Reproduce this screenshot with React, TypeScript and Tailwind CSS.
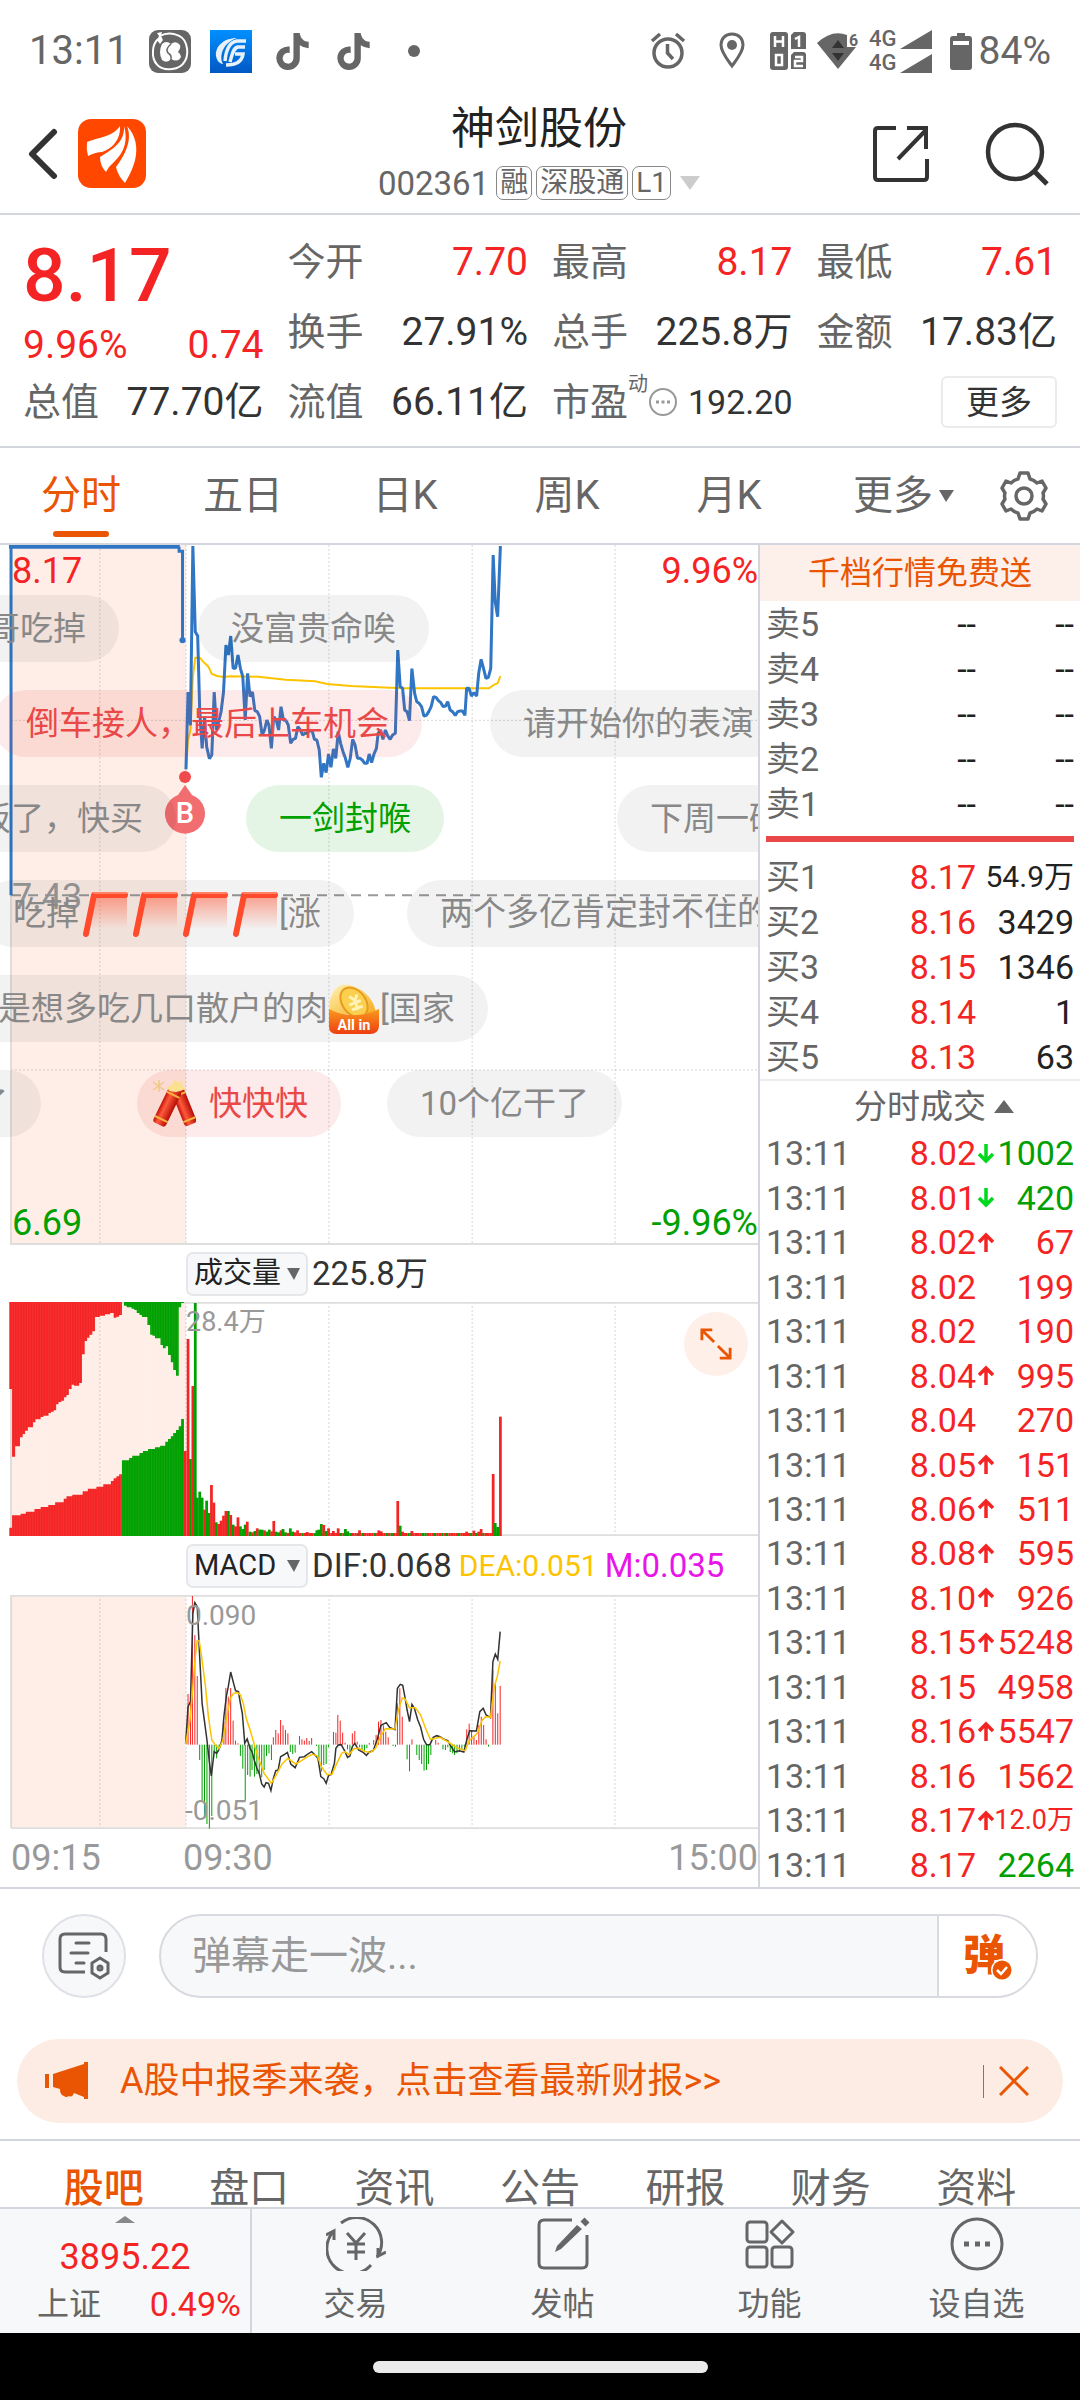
import React from "react";
import { FaTiktok } from "react-icons/fa6";

type Tone = "red" | "green";

const quoteRows: { label: string; value: string; tone: string }[] = [
  { label: "今开", value: "7.70", tone: "text-[#f52424]" },
  { label: "最高", value: "8.17", tone: "text-[#f52424]" },
  { label: "最低", value: "7.61", tone: "text-[#f52424]" },
  { label: "换手", value: "27.91%", tone: "text-[#333333]" },
  { label: "总手", value: "225.8万", tone: "text-[#333333]" },
  { label: "金额", value: "17.83亿", tone: "text-[#333333]" },
];

const bids = [
  { label: "买1", price: "8.17", size: "54.9万" },
  { label: "买2", price: "8.16", size: "3429" },
  { label: "买3", price: "8.15", size: "1346" },
  { label: "买4", price: "8.14", size: "1" },
  { label: "买5", price: "8.13", size: "63" },
];

const trades: { price: string; dir?: "up" | "down"; size: string; tone: Tone }[] = [
  { price: "8.02", dir: "down", size: "1002", tone: "green" },
  { price: "8.01", dir: "down", size: "420", tone: "green" },
  { price: "8.02", dir: "up", size: "67", tone: "red" },
  { price: "8.02", size: "199", tone: "red" },
  { price: "8.02", size: "190", tone: "red" },
  { price: "8.04", dir: "up", size: "995", tone: "red" },
  { price: "8.04", size: "270", tone: "red" },
  { price: "8.05", dir: "up", size: "151", tone: "red" },
  { price: "8.06", dir: "up", size: "511", tone: "red" },
  { price: "8.08", dir: "up", size: "595", tone: "red" },
  { price: "8.10", dir: "up", size: "926", tone: "red" },
  { price: "8.15", dir: "up", size: "5248", tone: "red" },
  { price: "8.15", size: "4958", tone: "red" },
  { price: "8.16", dir: "up", size: "5547", tone: "red" },
  { price: "8.16", size: "1562", tone: "red" },
  { price: "8.17", dir: "up", size: "12.0万", tone: "red" },
  { price: "8.17", size: "2264", tone: "green" },
];

const priceLine =
  "540,718 546,486 553,586 560,48 567,305 574,318 580,545 587,655 594,560 600,650 608,686 615,675 622,486 629,600 636,570 642,545 649,486 656,345 663,375 670,318 677,415 684,415 691,375 698,415 705,440 712,570 719,430 726,500 733,486 740,542 747,545 754,560 761,615 768,600 775,570 781,586 788,655 795,560 802,570 809,600 816,530 823,570 830,571 837,585 844,640 851,628 858,625 865,590 872,600 879,615 886,610 893,610 900,600 907,605 913,628 920,630 927,660 933,742 940,700 947,728 954,672 961,712 968,657 975,685 982,605 989,640 996,665 1003,685 1010,712 1017,685 1024,628 1031,645 1038,685 1045,685 1052,690 1059,700 1066,700 1072,672 1079,698 1086,672 1093,655 1098,610 1105,600 1112,628 1119,600 1126,618 1133,628 1140,615 1148,610 1155,360 1162,470 1169,475 1175,540 1182,545 1189,572 1196,416 1204,490 1210,515 1217,520 1224,530 1231,558 1238,556 1245,545 1252,530 1259,500 1266,502 1273,512 1280,518 1287,530 1294,528 1300,515 1307,540 1314,545 1322,556 1329,545 1336,543 1343,543 1350,556 1355,475 1362,475 1369,498 1376,488 1384,498 1390,430 1397,388 1404,415 1411,445 1418,442 1425,415 1432,75 1438,215 1445,260 1453,48";
const averageLine =
  "540,718 546,630 553,600 560,440 567,383 580,383 590,395 605,410 615,432 630,438 650,441 670,439 750,440 830,449 915,454 950,462 1020,468 1100,472 1170,475 1420,475 1435,464 1445,460 1453,438";

const difLine =
  "383,612 388,500 393,485 398,220 402,188 407,200 412,350 417,490 422,545 427,600 432,665 436,708 442,635 447,640 452,628 458,600 462,530 467,470 471,440 476,396 482,430 486,452 492,455 496,490 500,520 505,610 510,597 516,625 520,635 525,662 530,685 535,700 540,732 545,741 549,728 554,730 559,752 564,715 569,692 574,690 579,650 585,645 593,637 600,672 609,683 618,652 628,650 635,642 643,635 650,645 656,655 662,710 668,716 673,730 678,706 683,704 690,670 693,625 698,615 704,614 712,635 717,652 722,648 727,620 732,610 740,630 750,638 756,646 762,636 770,632 778,600 786,556 797,548 804,562 815,569 820,445 826,433 831,436 836,475 840,510 845,545 850,493 855,505 862,540 868,562 874,598 880,614 887,614 894,592 901,587 908,590 916,598 924,602 930,618 938,636 948,632 957,636 963,600 969,572 983,573 990,515 997,505 1003,525 1012,533 1017,365 1022,342 1027,358 1032,275";
const deaLine =
  "383,612 392,540 398,440 403,350 407,302 411,302 416,350 424,440 430,530 437,600 445,616 452,626 460,600 468,530 475,475 482,460 490,458 496,465 502,490 508,535 516,570 524,610 532,650 545,700 560,730 570,705 582,672 594,655 610,672 622,662 635,650 645,643 655,648 663,680 675,704 685,702 695,670 705,640 712,635 720,644 730,626 740,625 755,635 765,637 775,625 785,590 795,566 815,567 822,510 830,474 835,475 845,503 857,503 868,525 878,565 888,598 895,596 908,592 925,606 945,625 960,632 968,602 985,580 995,540 1003,530 1012,532 1020,440 1026,410 1032,363";

/* Histogram values sit on a zero line at 614; smaller numbers rise above it. */
const macdBars: [number, number][] = [
  [388, 462], [393, 485], [397, 168], [402, 285], [407, 408], [412, 660], [417, 780], [422, 830], [427, 852], [432, 866], [437, 828],
  [442, 640], [447, 655], [452, 622], [457, 598], [462, 545], [466, 444], [471, 470], [476, 444], [481, 542], [486, 602], [491, 610],
  [496, 648], [501, 686], [506, 782], [511, 705], [516, 710], [520, 690], [525, 710], [530, 702], [535, 706], [540, 712], [545, 690],
  [550, 648], [555, 640], [560, 660], [564, 592], [569, 570], [574, 580], [579, 540], [584, 556], [589, 570], [594, 580], [599, 636],
  [604, 642], [609, 638], [618, 588], [623, 598], [628, 602], [633, 594], [638, 603], [643, 594], [653, 618], [658, 660], [663, 695],
  [668, 675], [673, 672], [678, 622], [688, 576], [693, 578], [697, 525], [702, 542], [707, 578], [712, 608], [717, 628], [722, 640],
  [727, 580], [732, 573], [737, 605], [742, 622], [747, 630], [752, 636], [757, 625], [762, 609], [771, 600], [776, 585], [781, 545],
  [786, 540], [791, 556], [796, 575], [801, 592], [811, 618], [816, 620], [820, 490], [825, 445], [830, 530], [840, 658], [845, 694],
  [850, 598], [860, 645], [865, 660], [870, 672], [875, 692], [880, 690], [884, 672], [889, 645], [899, 600], [904, 608], [914, 628],
  [919, 630], [924, 622], [929, 636], [934, 640], [938, 645], [943, 640], [948, 636], [953, 628], [958, 618], [963, 568], [968, 551],
  [973, 570], [978, 590], [983, 600], [988, 555], [993, 530], [998, 555], [1003, 598], [1008, 620], [1017, 390], [1022, 430],
  [1027, 520], [1032, 438],
];

const volumeBars: [number, number, Tone][] = [
  [538, 636, "red"], [546, 300, "red"], [553, 660, "green"], [560, 441, "red"], [567, 192, "green"], [573, 776, "green"],
  [580, 758, "green"], [587, 776, "green"], [594, 812, "red"], [600, 785, "green"], [607, 822, "green"], [614, 738, "red"],
  [621, 791, "red"], [628, 850, "green"], [635, 855, "red"], [642, 845, "red"], [649, 830, "red"], [656, 816, "red"],
  [663, 816, "green"], [670, 828, "red"], [677, 857, "green"], [684, 862, "red"], [691, 835, "red"], [698, 862, "green"],
  [705, 870, "green"], [712, 857, "green"], [718, 848, "red"], [726, 878, "green"], [733, 880, "red"], [740, 876, "green"],
  [747, 868, "red"], [754, 872, "green"], [761, 872, "green"], [768, 874, "red"], [775, 878, "green"], [782, 872, "green"],
  [789, 877, "red"], [795, 846, "red"], [802, 878, "green"], [809, 880, "green"], [816, 874, "red"], [822, 870, "green"],
  [829, 880, "green"], [836, 882, "red"], [843, 868, "green"], [850, 878, "green"], [857, 880, "red"], [864, 874, "red"],
  [892, 879, "red"], [920, 874, "green"], [926, 872, "green"], [933, 855, "green"], [940, 858, "red"], [947, 876, "green"],
  [954, 868, "red"], [968, 876, "red"], [982, 868, "red"], [1003, 870, "green"], [1010, 877, "green"], [1044, 874, "red"],
  [1100, 874, "red"], [1107, 877, "red"], [1155, 786, "red"], [1162, 860, "green"], [1169, 878, "red"], [1196, 876, "red"],
  [1355, 878, "red"], [1376, 875, "red"], [1390, 878, "red"], [1397, 870, "red"], [1432, 705, "red"], [1438, 852, "green"],
  [1445, 864, "green"], [1453, 533, "red"],
];
const quietTicks = Array.from({ length: 82 }, (_, i) => 868 + i * 7);

/* Each pair is the right end of a step and its level. */
const auctionRedTop: [number, number][] = [
  [35, 450], [44, 653], [58, 622], [66, 595], [73, 585], [81, 575], [96, 565], [103, 550], [118, 541], [126, 534], [141, 530],
  [148, 522], [156, 518], [163, 514], [170, 496], [178, 489], [186, 485], [193, 475], [200, 468], [208, 450], [215, 437], [230, 440],
  [238, 432], [246, 346], [253, 306], [260, 296], [268, 287], [276, 277], [290, 234], [305, 230], [320, 226], [330, 222], [338, 236],
  [346, 233], [354, 228],
];
const auctionGreenTop: [number, number][] = [
  [368, 200], [382, 205], [390, 209], [397, 213], [405, 222], [412, 228], [428, 234], [436, 258], [443, 287], [450, 290], [466, 298],
  [473, 318], [481, 328], [488, 322], [496, 348], [503, 370], [511, 393], [519, 410], [526, 205], [534, 192],
];
const auctionRedBottom: [number, number][] = [
  [35, 866], [60, 829], [75, 824], [100, 818], [118, 810], [140, 804], [160, 798], [185, 790], [193, 779], [210, 772], [240, 767],
  [255, 757], [280, 749], [300, 743], [322, 736], [330, 726], [338, 718], [346, 712], [354, 706],
];
const auctionGreenBottom: [number, number][] = [
  [375, 664], [384, 657], [405, 650], [415, 642], [430, 636], [450, 630], [465, 625], [480, 620], [488, 608], [496, 600], [503, 592],
  [511, 582], [519, 573], [526, 562], [534, 540],
];

function stepPath(start: number, base: number, steps: [number, number][]) {
  return `M${start} ${base} ${steps.map(([x, y]) => `V${y} H${x}`).join(" ")} V${base} Z`;
}

function StatusBar() {
  return (
    <div className="flex h-[102px] items-center justify-between pl-[29px] pr-[29px] text-[#666666]">
      <div className="flex items-center">
        <span className="w-[120px] text-[40px] leading-none">13:11</span>
        <svg width="42" height="43" viewBox="0 0 42 43">
          <rect width="42" height="43" rx="9" fill="#666666" />
          <path d="M11 6 C20 1 34 4 37 14 C41 27 35 38 23 39 C10 41 3 32 4 21 C4 16 6 12 9 9" fill="none" stroke="#fff" strokeWidth="2" />
          <path d="M8 3 L13 2 L12 6 L14 10 L11 14 L8 10 L10 6 Z" fill="#fff" />
          <path d="M13 14 Q9 22 13 30 Q18 34 22 29 Q29 33 32 27 Q32 24 29 22 Q32 18 31 15 Q27 10 22 14 Q17 10 13 14Z" fill="#fff" />
          <path d="M22 14 Q16 19 19 23 Q23 25 22 30" stroke="#666666" strokeWidth="1.500" fill="none" />
        </svg>
        <svg className="ml-[19px]" width="42" height="43" viewBox="0 0 42 43" fill="none" stroke="#e8f0fa">
          <defs>
            <linearGradient id="gf" x1="0" y1="0" x2="0" y2="1">
              <stop offset="0" stopColor="#0090ff" />
              <stop offset="1" stopColor="#0058c4" />
            </linearGradient>
          </defs>
          <rect width="42" height="43" fill="url(#gf)" stroke="none" />
          <path d="M27 8 C13 8 5 17 6 26 C7 32 11 34 13 34 C9 27 12 13 27 8Z" fill="#e8f0fa" stroke="none" />
          <path d="M36 11 H27 C19 12 16 20 15 31" strokeWidth="3.500" />
          <path d="M35 17 H28 C23 18 22 25 20 32" strokeWidth="3.500" />
          <path d="M25 24 H33 C32 31 27 35 16 35" strokeWidth="3.500" />
        </svg>
        <FaTiktok className="ml-[22px]" size={37} />
        <FaTiktok className="ml-[24px]" size={37} />
        <span className="ml-[36px] size-[12px] rounded-full bg-[#666666]" />
      </div>
      <div className="flex items-center">
        <svg width="36" height="38" viewBox="0 0 36 38" fill="none" stroke="#666666" strokeWidth="3.500">
          <circle cx="18" cy="21" r="14" />
          <path d="M17.500 12 V21 L23 27 M2 9 L10 2 M34 9 L26 2" />
        </svg>
        <svg className="ml-[33px]" width="26" height="38" viewBox="0 0 26 38">
          <path d="M13 2 C6 2 2 7 2 13 C2 20 8 27 13 34 C18 27 24 20 24 13 C24 7 20 2 13 2Z" fill="none" stroke="#666666" strokeWidth="3" />
          <circle cx="13" cy="13" r="5" fill="#666666" />
        </svg>
        <svg className="ml-[25px]" width="36" height="40" viewBox="0 0 36 40" fill="none">
          <rect x="0" y="1" width="18" height="38" rx="3" fill="#666666" />
          <path d="M5 5 V16 M13 5 V16 M5 10.500 H13 M6 24 H12 V34 H6 Z" stroke="#fff" strokeWidth="2.500" />
          <path d="M24 1 H33 Q36 1 36 4 V18 H21 V4Z M24 21 H33 Q36 21 36 24 V38 H21 V24Z" fill="#666666" />
          <path d="M25 8 L29 6 V16 M25 26 H32 V30 H25 V35 H33" stroke="#fff" strokeWidth="2.500" />
        </svg>
        <div className="relative ml-[11px] h-[36px] w-[41px]">
          <svg width="41" height="36" viewBox="0 0 41 36">
            <path d="M0 10 Q15 -4 30 2 V14 H39 L21 36Z" fill="#666666" />
            <path d="M15 15 L21 7 L27 15Z M15 20 H27 L21 28Z" fill="#333" />
          </svg>
          <span className="absolute right-0 top-0 text-[16px] font-bold leading-none">6</span>
        </div>
        <div className="ml-[11px] grid gap-[2px]">
          {[0, 1].map((n) => (
            <div key={n} className="flex items-center gap-[3px]">
              <span className="text-[22px] font-medium leading-none">4G</span>
              <svg width="32" height="19" viewBox="0 0 32 19">
                <path d="M32 0 V19 H0Z" fill="#666666" />
              </svg>
            </div>
          ))}
        </div>
        <svg className="ml-[18px]" width="22" height="37" viewBox="0 0 22 37">
          <path d="M7 0 H15 V3 H19 Q22 3 22 6 V34 Q22 37 19 37 H3 Q0 37 0 34 V6 Q0 3 3 3 H7Z" fill="#666666" />
          <rect x="3" y="8" width="16" height="4" fill="#fff" />
        </svg>
        <span className="ml-[7px] text-[39px] leading-none">84%</span>
      </div>
    </div>
  );
}

function Header() {
  return (
    <header className="flex h-[113px] items-center justify-between border-b-2 border-[#d4d6dd] pb-[8px] pl-[28px] pr-[30px]">
      <div className="flex flex-1 items-center gap-[14px]">
        <button aria-label="返回">
          <svg width="36" height="54" viewBox="4 0 36 54">
            <path d="M30 5 L8 27 L30 49" fill="none" stroke="#333" strokeWidth="6" strokeLinecap="round" strokeLinejoin="round" />
          </svg>
        </button>
        <svg width="68" height="69" viewBox="0 0 68 69">
          <rect width="68" height="69" rx="13" fill="#ff4700" />
          <path d="M42 7 C36 17 22 18 9 23 Q8 30 10 37 Q18 33 24 33 C34 30 43 20 42 7Z" fill="#fff" />
          <path d="M46 7 C47 23 35 30 22 38 C22 44 24 49 28 53 Q31 47 36 43 C47 33 50 20 46 7Z" fill="#fff" />
          <path d="M49 7 C55 22 46 37 38 48 Q40 57 47 64 C53 54 68 28 49 7Z" fill="#fff" />
        </svg>
      </div>
      <div className="flex flex-col items-center gap-[15px]">
        <h1 className="text-[44px] leading-none text-[#222]">神剑股份</h1>
        <button className="flex items-center gap-[4px] text-[#666666]">
          <span className="mr-[3px] text-[33px] leading-none">002361</span>
          <span className="flex h-[34px] items-center rounded-[7px] border border-[#888] px-[3px] text-[28px] leading-none">融</span>
          <span className="flex h-[34px] items-center rounded-[7px] border border-[#888] px-[3px] text-[28px] leading-none">深股通</span>
          <span className="flex h-[34px] items-center rounded-[7px] border border-[#888] px-[3px] text-[28px] leading-none">L1</span>
          <svg className="ml-[5px]" width="20" height="14" viewBox="0 0 20 14">
            <path d="M0 0 H20 L10 14Z" fill="#cccccc" />
          </svg>
        </button>
      </div>
      <div className="flex flex-1 items-center justify-end gap-[56px]">
        <button aria-label="分享">
          <svg width="56" height="58" viewBox="0 0 56 58" fill="none" stroke="#333" strokeWidth="4">
            <path d="M23 3 H5 Q2 3 2 6 V52 Q2 55 5 55 H51 Q54 55 54 52 V34 M34 3 H53 V24 M25 34 L53 5" />
          </svg>
        </button>
        <button aria-label="搜索">
          <svg width="65" height="66" viewBox="0 0 65 66" fill="none" stroke="#333" strokeWidth="4.500">
            <circle cx="30" cy="31" r="27" />
            <path d="M49 50 L62 63" strokeWidth="5" />
          </svg>
        </button>
      </div>
    </header>
  );
}

function Quote() {
  return (
    <section className="border-b-2 border-[#d4d6dd] px-[23px] pb-[9px] pt-[12px] text-[39px] leading-none">
      <div className="flex gap-[24px]">
        <div className="flex flex-1 flex-col justify-between pb-[2px] pt-[3px]">
          <div className="flex h-[90px] items-center text-[75px] font-medium text-[#f52424]">8.17</div>
          <div className="flex h-[40px] items-center justify-between text-[#f52424]">
            <span>9.96%</span>
            <span>0.74</span>
          </div>
        </div>
        <dl className="grid flex-[3_3_48px] grid-cols-3 gap-x-[24px]">
          {quoteRows.map((q) => (
            <div key={q.label} className="flex h-[70px] items-center justify-between">
              <dt className="text-[38px] text-[#666666]">{q.label}</dt>
              <dd className={q.tone}>{q.value}</dd>
            </div>
          ))}
        </dl>
      </div>
      <div className="grid h-[70px] grid-cols-4 items-center gap-x-[24px]">
        <div className="flex items-center justify-between">
          <span className="text-[38px] text-[#666666]">总值</span>
          <span className="text-[#333]">77.70亿</span>
        </div>
        <div className="flex items-center justify-between">
          <span className="text-[38px] text-[#666666]">流值</span>
          <span className="text-[#333]">66.11亿</span>
        </div>
        <div className="flex items-center justify-between">
          <span className="flex items-center text-[38px] text-[#666666]">
            市盈<sup className="relative -top-[18px] text-[20px] leading-none">动</sup>
            <svg width="30" height="30" viewBox="0 0 30 30">
              <circle cx="15" cy="15" r="13" fill="none" stroke="#999" strokeWidth="2" />
              <path d="M8 15 h3 M13.500 15 h3 M19 15 h3" stroke="#999" strokeWidth="3" />
            </svg>
          </span>
          <span className="text-[34px] text-[#333]">192.20</span>
        </div>
        <button className="h-[52px] w-[116px] justify-self-end rounded-[6px] border-2 border-[#ebebeb] text-[33px] leading-none text-[#333]">
          更多
        </button>
      </div>
    </section>
  );
}

function PeriodTabs() {
  const tabs = ["分时", "五日", "日K", "周K", "月K"];
  return (
    <nav className="flex h-[97px] items-center border-b-2 border-[#d4d6dd] text-[40px] leading-none text-[#666666]">
      {tabs.map((t, i) => (
        <button
          key={t}
          className={i === 0 ? "relative flex h-full flex-[9] items-center justify-center text-[#ea5504]" : "flex h-full flex-[9] items-center justify-center"}
        >
          {t}
          {i === 0 && <span className="absolute bottom-[6px] h-[6px] w-[56px] rounded-full bg-[#ea5504]" />}
        </button>
      ))}
      <button className="flex h-full flex-[8] items-center justify-end gap-[6px]">
        更多
        <svg width="15" height="12" viewBox="0 0 15 12">
          <path d="M0 0 H15 L7 12Z" fill="#666666" />
        </svg>
      </button>
      <button aria-label="设置" className="flex h-full flex-[7] items-center justify-center">
        <svg className="ml-[14px]" width="48" height="50" viewBox="0 0 48 50" fill="none" stroke="#666666" strokeWidth="3.500" strokeLinejoin="round">
          <path d="M20 2 H28 L30 8 Q34 9 37 12 L42 10 L46 17 L43 22 Q44 25 43 28 L46 33 L42 40 L37 38 Q34 41 30 42 L28 48 H20 L18 42 Q14 41 11 38 L6 40 L2 33 L5 28 Q4 25 5 22 L2 17 L6 10 L11 12 Q14 9 18 8Z" />
          <circle cx="24" cy="25" r="8" />
        </svg>
      </button>
    </nav>
  );
}

function Comment({ row, left, tone = "gray", children }: { row: string; left: string; tone?: "gray" | Tone; children: React.ReactNode }) {
  const look = { gray: "bg-black/5 text-[#888888]", red: "bg-[#f03030]/10 text-[#ea4848]", green: "bg-[#00a000]/10 text-[#00a000]" }[tone];
  return (
    <div className={`absolute flex h-[67px] items-center whitespace-nowrap rounded-full px-[33px] text-[33px] leading-none ${row} ${left} ${look}`}>
      {children}
    </div>
  );
}

function LimitUpEmoji() {
  return (
    <svg className="shrink-0" width="50" height="50" viewBox="0 0 50 50">
      <defs>
        <linearGradient id="limitFade" x1="0" y1="0" x2="0" y2="1">
          <stop offset="0" stopColor="#ff5533" stopOpacity=".55" />
          <stop offset="1" stopColor="#ff5533" stopOpacity="0" />
        </linearGradient>
      </defs>
      <path d="M13 5 H48 V40 H8Z" fill="url(#limitFade)" />
      <path d="M7 45 L15 6 H46" fill="none" stroke="#ff4a2c" strokeWidth="6" strokeLinecap="round" strokeLinejoin="round" />
      <path d="M15 4 H47" stroke="#ff8266" strokeWidth="2" strokeLinecap="round" />
    </svg>
  );
}

function AllInEmoji() {
  return (
    <svg className="shrink-0" width="52" height="54" viewBox="0 0 54 54">
      <defs>
        <linearGradient id="pouch" x1="0" y1="0" x2="0" y2="1">
          <stop offset="0" stopColor="#fb9a1e" />
          <stop offset="1" stopColor="#ec3e10" />
        </linearGradient>
        <linearGradient id="coin" x1="0" y1="0" x2="1" y2="1">
          <stop offset="0" stopColor="#fff3b0" />
          <stop offset="1" stopColor="#f6a91c" />
        </linearGradient>
      </defs>
      <path d="M2 32 C-1 14 8 0 20 2 C38 4 50 20 50 34Z" fill="url(#coin)" />
      <ellipse cx="27" cy="20" rx="12" ry="17" transform="rotate(-38 27 20)" fill="#fbd050" stroke="#e79a1c" strokeWidth="2" />
      <path d="M22 14 L28 18 L30 12 M28 18 L31 28 M22 23 L34 18 M25 28 L36 24" stroke="#fff3b8" strokeWidth="3" fill="none" />
      <path d="M1 27 Q26 40 53 27 V45 Q52 53 44 53 H9 Q1 53 1 45Z" fill="url(#pouch)" />
      <text x="27" y="49" textAnchor="middle" fontSize="15" fontWeight="700" fill="#fff">All in</text>
    </svg>
  );
}

function FirecrackerEmoji() {
  return (
    <svg className="shrink-0" width="46" height="50" viewBox="0 0 46 50">
      <defs>
        <linearGradient id="tube" x1="0" y1="0" x2="1" y2="0">
          <stop offset="0" stopColor="#c01208" />
          <stop offset=".35" stopColor="#ff5a3c" />
          <stop offset="1" stopColor="#b50d06" />
        </linearGradient>
      </defs>
      <path d="M3 3 L14 11 M14 3 L3 11 M9 1 V13" stroke="#eec984" strokeWidth="1.500" />
      <g transform="rotate(-22 28 14)">
        <rect x="22" y="10" width="13" height="38" rx="3" fill="url(#tube)" />
        <path d="M22 16 H35 M22 43 H35" stroke="#f3b33c" strokeWidth="2" />
      </g>
      <g transform="rotate(26 24 14)">
        <rect x="17" y="10" width="14" height="39" rx="3" fill="url(#tube)" />
        <path d="M17 16 H31 M17 43 H31" stroke="#f3b33c" strokeWidth="2" />
      </g>
      <path d="M25 0 L28 4 L33 2 L32 6 L36 10 L30 12 L26 13 L19 12 L17 8 L22 6Z" fill="#fbe08e" />
    </svg>
  );
}

const solid = { vectorEffect: "non-scaling-stroke" as const, fill: "none" };

function PriceChart() {
  return (
    <div className="relative h-[700px] overflow-hidden">
      <svg className="block h-full w-full" viewBox="0 45 2201 2100" preserveAspectRatio="none">
        <rect x="32" y="45" width="508" height="2100" fill="#feeee7" />
        <g stroke="#000" strokeOpacity=".16" strokeDasharray="2 2">
          {[290, 540, 955, 1371, 1786].map((x) => (
            <path key={x} d={`M${x} 45 V2145`} {...solid} />
          ))}
          <path d="M32 571 H2201 M32 1620 H2201" {...solid} />
        </g>
        <path d="M32 45 V2142 H2201" stroke="#dedede" strokeWidth="2" {...solid} />
        <path d="M32 1096 H2201" stroke="#999999" strokeWidth="2" strokeDasharray="10 7" {...solid} />
        <polyline points={averageLine} stroke="#fcc300" strokeWidth="2" {...solid} />
        <path d="M32 1096 V49" stroke="#3076c4" strokeWidth="3" {...solid} />
        <path d="M26 50 H522" stroke="#3076c4" strokeWidth="4" {...solid} />
        <path d="M520 50 V64 H530 V330" stroke="#3076c4" strokeWidth="3" {...solid} />
        <ellipse cx="530" cy="331" rx="9" ry="9" fill="#3076c4" />
        <polyline points={priceLine} stroke="#3076c4" strokeWidth="3" strokeLinejoin="bevel" {...solid} />
      </svg>
      <span className="absolute left-[12px] top-[8px] text-[36px] leading-none text-[#f52424]">8.17</span>
      <span className="absolute right-0 top-[8px] text-[36px] leading-none text-[#f52424]">9.96%</span>
      <span className="absolute left-[12px] top-[334px] text-[36px] leading-none text-[#999]">7.43</span>
      <span className="absolute bottom-[4px] left-[12px] text-[36px] leading-none text-[#00a000]">6.69</span>
      <span className="absolute bottom-[4px] right-0 text-[36px] leading-none text-[#00a000]">-9.96%</span>

      <svg className="absolute left-[165px] top-[225px]" width="41" height="64" viewBox="0 0 41 64">
        <circle cx="20" cy="7" r="6" fill="#f04a4c" />
        <path d="M20 15 L27 25 A20 20 0 1 1 13 25Z" fill="#f26d6f" />
        <text x="20" y="53" textAnchor="middle" fontSize="29" fontWeight="500" fill="#fff">B</text>
      </svg>

      <Comment row="top-[50px]" left="-left-[46px]">哥吃掉</Comment>
      <Comment row="top-[50px]" left="left-[198px]">没富贵命唉</Comment>
      <Comment row="top-[145px]" left="-left-[7px]" tone="red">倒车接人，最后上车机会</Comment>
      <Comment row="top-[145px]" left="left-[490px]">请开始你的表演</Comment>
      <Comment row="top-[240px]" left="-left-[55px]">板了，快买</Comment>
      <Comment row="top-[240px]" left="left-[246px]" tone="green">一剑封喉</Comment>
      <Comment row="top-[240px]" left="left-[617px]">下周一砖头</Comment>
      <Comment row="top-[335px]" left="-left-[20px]">
        吃掉<LimitUpEmoji /><LimitUpEmoji /><LimitUpEmoji /><LimitUpEmoji />[涨
      </Comment>
      <Comment row="top-[335px]" left="left-[407px]">两个多亿肯定封不住的</Comment>
      <Comment row="top-[430px]" left="-left-[35px]">是想多吃几口散户的肉<AllInEmoji />[国家</Comment>
      <Comment row="top-[525px]" left="-left-[58px]">了</Comment>
      <Comment row="top-[525px]" left="left-[137px]" tone="red">
        <span className="-ml-[20px] mr-[13px]"><FirecrackerEmoji /></span>快快快
      </Comment>
      <Comment row="top-[525px]" left="left-[387px]">10个亿干了</Comment>
    </div>
  );
}

function IndicatorButton({ children }: { children: React.ReactNode }) {
  return (
    <button className="flex h-[44px] w-[122px] shrink-0 items-center justify-between rounded-[7px] border-2 border-[#e6e7ea] bg-[#f7f8fa] pl-[6px] pr-[6px] text-[29px] leading-none text-[#222]">
      {children}
      <svg width="13" height="12" viewBox="0 0 13 12">
        <path d="M0 0 H13 L7 12Z" fill="#666666" />
      </svg>
    </button>
  );
}

function VolumeChart() {
  return (
    <div className="relative h-[234px]">
      <svg className="block h-full w-full" viewBox="0 189 2201 702" preserveAspectRatio="none">
        <rect x="32" y="189" width="508" height="702" fill="#feeee7" />
        <g stroke="#000" strokeOpacity=".16" strokeDasharray="2 2">
          {[290, 540, 955, 1371, 1786].map((x) => (
            <path key={x} d={`M${x} 189 V891`} {...solid} />
          ))}
        </g>
        <path d="M32 889 V191 H2201 M32 889 H2201" stroke="#dedede" strokeWidth="2" {...solid} />
        <path d={stepPath(27, 189, auctionRedTop)} fill="#f52424" />
        <path d={stepPath(360, 189, auctionGreenTop)} fill="#00a000" />
        <path d={stepPath(27, 891, auctionRedBottom)} fill="#f52424" />
        <path d={stepPath(354, 891, auctionGreenBottom)} fill="#00a000" />
        <g stroke="#ffffff" strokeOpacity=".07">
          {Array.from({ length: 66 }, (_, i) => (
            <path key={i} d={`M${35 + i * 7.5} 189 V891`} {...solid} />
          ))}
        </g>
        {quietTicks.map((x, i) => (
          <rect key={x} x={x} y="882" width="7" height="9" fill={i % 5 === 1 || i % 7 === 3 ? "#00a000" : "#f52424"} />
        ))}
        {volumeBars.map(([x, y, tone]) => (
          <rect key={x} x={x - 4} y={y} width="8" height={891 - y} fill={tone === "red" ? "#f52424" : "#00a000"} />
        ))}
      </svg>
      <span className="absolute left-[186px] top-[7px] text-[27px] leading-none text-[#999]">28.4万</span>
      <button aria-label="全屏" className="absolute right-[10px] top-[10px] flex size-[64px] items-center justify-center rounded-full bg-[#fef0e9]">
        <svg width="32" height="32" viewBox="0 0 34 34" fill="none" stroke="#ea5504" strokeWidth="3">
          <path d="M2 13 V2 H13 M2 2 L15 15 M32 21 V32 H21 M32 32 L19 19" />
        </svg>
      </button>
    </div>
  );
}

function MacdChart() {
  return (
    <div className="relative h-[234px]">
      <svg className="block h-full w-full" viewBox="0 165 1564 702" preserveAspectRatio="none">
        <rect x="23" y="165" width="361" height="702" fill="#feeee7" />
        <g stroke="#000" strokeOpacity=".16" strokeDasharray="2 2">
          {[206, 384, 679, 974, 1269].map((x) => (
            <path key={x} d={`M${x} 165 V867`} {...solid} />
          ))}
        </g>
        <path d="M23 864 V167 H1564 M23 865 H1564" stroke="#dedede" strokeWidth="2" {...solid} />
        {macdBars.map(([x, y]) => (
          <path key={x} d={`M${x} 614 V${y}`} stroke={y < 614 ? "#f52424" : "#00a000"} strokeWidth="1" {...solid} />
        ))}
        <polyline points={difLine} stroke="#333" strokeWidth="1.500" {...solid} />
        <polyline points={deaLine} stroke="#fcc300" strokeWidth="1.500" {...solid} />
      </svg>
      <span className="absolute left-[186px] top-[7px] text-[28px] leading-none text-[#999]">0.090</span>
      <span className="absolute bottom-[4px] left-[185px] text-[28px] leading-none text-[#999]">-0.051</span>
    </div>
  );
}

function OrderBook() {
  return (
    <aside className="flex w-[322px] shrink-0 flex-col border-l-2 border-[#d4d6dd] text-[34px] leading-none">
      <a href="#depth" className="flex h-[56px] items-center justify-center bg-[#fdf0eb] text-[32px] text-[#ea5504]">千档行情免费送</a>
      <table className="w-full table-fixed">
        <tbody>
          {["卖5", "卖4", "卖3", "卖2", "卖1"].map((label) => (
            <tr key={label} className="h-[45px]">
              <th scope="row" className="pl-[6px] text-left font-normal text-[#666666]">{label}</th>
              <td className="w-[75px] text-right text-[#222]">--</td>
              <td className="w-[104px] pr-[6px] text-right text-[#222]">--</td>
            </tr>
          ))}
        </tbody>
      </table>
      <div className="mx-[6px] mb-[12px] mt-[10px] h-[6px] bg-[#e94848]" />
      <table className="w-full table-fixed">
        <tbody>
          {bids.map((b) => (
            <tr key={b.label} className="h-[45px]">
              <th scope="row" className="pl-[6px] text-left font-normal text-[#666666]">{b.label}</th>
              <td className="w-[75px] text-right text-[#f52424]">{b.price}</td>
              <td className={b.size.endsWith("万") ? "w-[104px] whitespace-nowrap pr-[6px] text-right text-[30px] text-[#222]" : "w-[104px] pr-[6px] text-right text-[#222]"}>{b.size}</td>
            </tr>
          ))}
        </tbody>
      </table>
      <button className="flex h-[52px] items-center justify-center gap-[8px] border-t-2 border-[#ececec] pl-[28px] text-[33px] text-[#666666]">
        分时成交
        <svg width="20" height="13" viewBox="0 0 20 13">
          <path d="M0 13 L10 0 L20 13Z" fill="#666666" />
        </svg>
      </button>
      <table className="w-full flex-1 table-fixed">
        <tbody>
          {trades.map((t, i) => (
            <tr key={i}>
              <td className="pl-[6px] text-[#666666]">13:11</td>
              <td className="w-[75px] text-right text-[#f52424]">{t.price}</td>
              <td className="w-[20px]">
                {t.dir && (
                  <svg className="mx-auto" width="16" height="21" viewBox="0 0 16 21" fill="none" stroke={t.dir === "up" ? "#f52424" : "#00d81e"} strokeWidth="3.500">
                    <path d={t.dir === "up" ? "M8 20 V3 M1 10 L8 3 L15 10" : "M8 1 V18 M1 11 L8 18 L15 11"} />
                  </svg>
                )}
              </td>
              <td className="w-[84px] pr-[6px]">
                <span
                  className={`flex justify-end whitespace-nowrap ${t.size.endsWith("万") ? "text-[27px]" : "text-[34px]"} ${t.tone === "red" ? "text-[#f52424]" : "text-[#00a000]"}`}
                >
                  {t.size}
                </span>
              </td>
            </tr>
          ))}
        </tbody>
      </table>
    </aside>
  );
}

function MarketPanel() {
  return (
    <main className="flex h-[1344px] border-b-2 border-[#d4d6dd]">
      <div className="flex min-w-0 flex-1 flex-col">
        <PriceChart />
        <div className="flex h-[57px] items-center gap-[4px] pl-[186px] text-[33px] leading-none text-[#333]">
          <IndicatorButton>成交量</IndicatorButton>
          <span>225.8万</span>
        </div>
        <VolumeChart />
        <div className="flex h-[59px] items-center gap-[4px] whitespace-nowrap pl-[186px] text-[33px] leading-none text-[#333]">
          <IndicatorButton>MACD</IndicatorButton>
          <span>DIF:0.068</span>
          <span className="ml-[3px] text-[30px] text-[#fcc300]">DEA:0.051</span>
          <span className="ml-[3px] text-[#e815e8]">M:0.035</span>
        </div>
        <MacdChart />
        <div className="flex flex-1 items-center justify-between pl-[11px] text-[36px] leading-none text-[#999]">
          <div className="flex">
            <span className="w-[172px]">09:15</span>
            <span>09:30</span>
          </div>
          <span>15:00</span>
        </div>
      </div>
      <OrderBook />
    </main>
  );
}

function CommentBar() {
  return (
    <div className="flex gap-[33px] pb-[41px] pl-[42px] pr-[42px] pt-[25px]">
      <button aria-label="弹幕设置" className="flex size-[84px] shrink-0 items-center justify-center rounded-full border-2 border-[#dfe1e6] bg-[#f7f8fa]">
        <svg width="52" height="48" viewBox="0 0 52 48" fill="none" stroke="#666666" strokeWidth="3">
          <path d="M48 20 V7 Q48 2 43 2 H7 Q2 2 2 7 V35 Q2 40 7 40 H27" />
          <path d="M18 11 H31 M13 21 H30 M18 31 H26" strokeLinecap="round" />
          <path d="M42 26 L50 31 V41 L42 46 L34 41 V31Z" />
          <circle cx="42" cy="36" r="2" />
        </svg>
      </button>
      <div className="flex h-[84px] flex-1 overflow-hidden rounded-full border-2 border-[#d8dae0] bg-[#f7f8fa]">
        <input
          aria-label="弹幕"
          placeholder="弹幕走一波..."
          className="min-w-0 flex-1 bg-transparent pl-[31px] text-[39px] placeholder:text-[#999]"
        />
        <button aria-label="弹幕开关" className="flex w-[99px] items-center border-l-2 border-[#d8dae0] bg-white pl-[24px]">
          <span className="relative text-[42px] font-black leading-none text-[#ea5504]">
            弹
            <svg className="absolute -bottom-[4px] -right-[8px]" width="22" height="22" viewBox="0 0 22 22">
              <circle cx="11" cy="11" r="11" fill="#fff" />
              <circle cx="11" cy="11" r="9.500" fill="#ea5504" />
              <path d="M6 11 L10 15 L16 8" fill="none" stroke="#fff" strokeWidth="2.500" />
            </svg>
          </span>
        </button>
      </div>
    </div>
  );
}

function NoticeBanner() {
  return (
    <div className="mx-[17px] mb-[16px] flex h-[84px] items-center rounded-full bg-[#fcece3] pl-[28px] pr-[34px] text-[#ea5504]">
      <svg width="43" height="38" viewBox="0 0 43 38" fill="#ea5504">
        <path d="M0 12 H4 V26 H0Z M8 12 L39 2 V0 H43 V37 H39 V35 L29 31 Q27 36 24 34 Q21 36 19 34 Q15 33 15 27 L8 25Z" />
      </svg>
      <a href="#report" className="ml-[32px] flex-1 text-[36px] leading-none">A股中报季来袭，点击查看最新财报&gt;&gt;</a>
      <span className="mr-[15px] h-[33px] w-px bg-[#ea5504]" />
      <button aria-label="关闭">
        <svg width="30" height="30" viewBox="0 0 30 30">
          <path d="M1 1 L29 29 M29 1 L1 29" stroke="#ea5504" strokeWidth="3" />
        </svg>
      </button>
    </div>
  );
}

function SectionTabs() {
  const tabs = ["股吧", "盘口", "资讯", "公告", "研报", "财务", "资料"];
  return (
    <nav className="flex h-[68px] items-start overflow-hidden border-t-2 border-[#d4d6dd] px-[31px] pt-[28px] text-[40px] leading-none text-[#666666]">
      {tabs.map((t, i) => (
        <a key={t} href={`#tab-${i}`} className={i === 0 ? "flex-1 text-center font-medium text-[#ea5504]" : "flex-1 text-center"}>
          {t}
        </a>
      ))}
    </nav>
  );
}

function BottomNav() {
  const items: { label: string; icon: React.ReactNode }[] = [
    {
      label: "交易",
      icon: (
        <>
          <path d="M15 6 A25 25 0 0 1 51 40 M45 48 A25 25 0 0 1 7 15" />
          <path d="M0 18 L8 14 V23 M60 35 L52 39 V31" />
          <path d="M21 16 L30 26 L39 16 M30 26 V43 M21 27 H39 M21 35 H39" />
        </>
      ),
    },
    {
      label: "发帖",
      icon: (
        <>
          <path d="M39 3 H11 Q6 3 6 8 V46 Q6 51 11 51 H49 Q54 51 54 46 V18" />
          <path d="M22 35 L24 29 L44 8 L49 12 L28 32Z" fill="#666666" stroke="none" />
          <path d="M50 7 L54 3" strokeWidth="7" />
        </>
      ),
    },
    {
      label: "功能",
      icon: (
        <>
          <rect x="7" y="5" width="20" height="20" rx="3" />
          <rect x="7" y="30" width="20" height="20" rx="3" />
          <rect x="32" y="30" width="20" height="20" rx="3" />
          <path d="M42 4 L53 15 L42 26 L31 15Z" strokeLinejoin="round" />
        </>
      ),
    },
    {
      label: "设自选",
      icon: (
        <>
          <circle cx="30" cy="27" r="25" />
          <path d="M17 27 h5 M28 27 h5 M38 27 h5" strokeWidth="5" />
        </>
      ),
    },
  ];
  return (
    <nav className="flex h-[126px] border-t-2 border-[#d4d6dd] bg-[#f7f8fa] leading-none text-[#666666]">
      <a href="#index" className="flex w-[252px] shrink-0 flex-col items-center border-r-2 border-[#d4d6dd] pt-[7px]">
        <svg width="20" height="7" viewBox="0 0 20 7">
          <path d="M0 7 L10 0 L20 7Z" fill="#888" />
        </svg>
        <span className="mt-[16px] text-[36px] text-[#f52424]">3895.22</span>
        <span className="mt-[12px] flex w-full items-center justify-between pl-[37px] pr-[9px]">
          <span className="text-[32px]">上证</span>
          <span className="text-[34px] text-[#f52424]">0.49%</span>
        </span>
      </a>
      {items.map((it) => (
        <button key={it.label} className="flex flex-1 flex-col items-center gap-[17px] pt-[8px] text-[32px] leading-none">
          <svg width="60" height="54" viewBox="0 0 60 54" fill="none" stroke="#666666" strokeWidth="3">
            {it.icon}
          </svg>
          {it.label}
        </button>
      ))}
    </nav>
  );
}

export default function App() {
  return (
    <div className="flex min-h-screen w-full flex-col bg-white font-['Roboto','Noto_Sans_CJK_SC',sans-serif]">
      <StatusBar />
      <Header />
      <Quote />
      <PeriodTabs />
      <MarketPanel />
      <CommentBar />
      <NoticeBanner />
      <SectionTabs />
      <BottomNav />
      <div className="flex flex-1 items-center justify-center bg-black">
        <span className="h-[12px] w-[335px] rounded-full bg-[#ebebeb]" />
      </div>
    </div>
  );
}
